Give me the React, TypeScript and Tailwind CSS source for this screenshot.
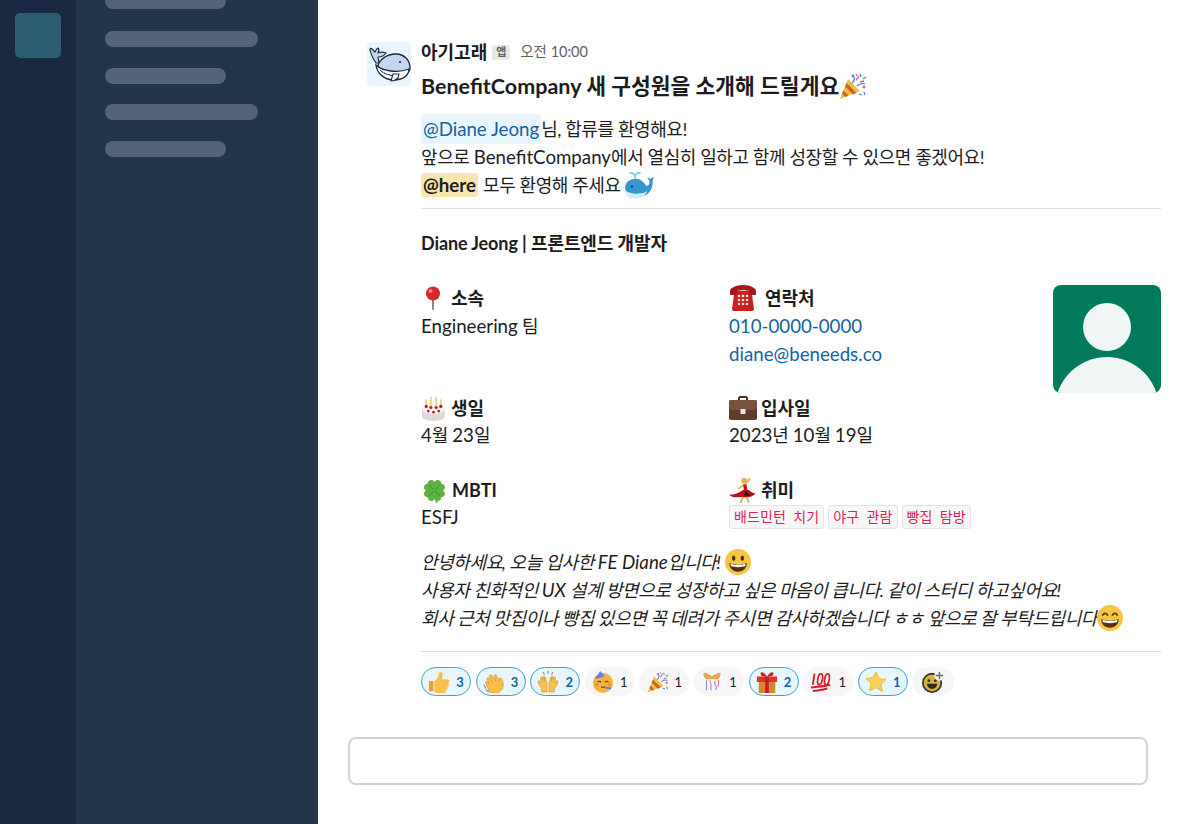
import type { ReactNode } from 'react';

const FONT = "font-['Lato','Noto_Sans_CJK_KR',sans-serif]";

type IconProps = { className?: string };

const Whale = ({ className }: IconProps) => (
  <svg viewBox="0 0 44 44" className={className}>
    <path d="M9 21C7 18 4 13 3 8c0-2 1-2 2-1l3 3c1-2 2-4 3-4 1 1 1 3 0 5 2-1 5-1 8 0-2 3-5 4-8 4 0 2 1 4 1 6z" fill="#c4d6f2" stroke="#1d2b3a" strokeWidth="1.200" strokeLinejoin="round" />
    <path d="M11 25c0-7 9-13 18-13 8 0 14 6 14 14 0 2-1 3-1 3-9 3-21 2-31-4z" fill="#c4d6f2" stroke="#1d2b3a" strokeWidth="1.300" />
    <path d="M9 23c5 5 20 9 33 4 0 7-7 11-15 11-9 0-17-6-18-15z" fill="#fff" stroke="#1d2b3a" strokeWidth="1.300" />
    <path d="M13 28c4 4 11 6 17 6" stroke="#1d2b3a" strokeWidth="1" fill="none" />
    <path d="M26 32l-2 7c2 0 5-1 7-3l1-4z" fill="#fff" stroke="#1d2b3a" strokeWidth="1.100" strokeLinejoin="round" />
    <circle cx="33" cy="20" r="1.100" fill="#1d2b3a" />
  </svg>
);

const Popper = ({ className }: IconProps) => (
  <svg viewBox="0 0 28 28" className={className}>
    <path d="M1 27l8-20 12 12z" fill="#f3bd3e" />
    <path d="M4.500 18.500l5 5-3 1.500-3.500-3.500zM7.500 11l10 10-3.500 1.500-8-8z" fill="#c8652a" />
    <circle cx="14" cy="4" r="1.400" fill="#4a8be0" />
    <circle cx="25" cy="15" r="1.400" fill="#e85a8a" />
    <path d="M13 11c2-2 3-4 2-6M18 14c2-2 5-3 8-2M21 2l1 3M24 7l3-2M20 22l3 1M25 20l1 3" stroke="#4a8be0" strokeWidth="1.300" fill="none" />
    <path d="M17 8l3-4M21 10l4-1M17 2l1 2" stroke="#e85a8a" strokeWidth="1.300" />
  </svg>
);

const SpoutWhale = ({ className }: IconProps) => (
  <svg viewBox="0 0 28 28" className={className}>
    <path d="M10 5C9 3 7 2 5 3M10 5c1-2 3-3 5-2M10 5v3" stroke="#7cc6e8" strokeWidth="1.500" fill="none" />
    <path d="M1 16c0-5 5-8 10-8 5 0 7 4 9 6 2 1 3-1 3-4l-2-3 3 1 3-2-1 4c0 8-4 14-12 14-8 1-13-3-13-8z" fill="#3597cf" />
    <path d="M1 18c3 3 9 4 14 3 3 0 5-1 6-2-2 5-6 7-11 7-5 0-9-3-9-8z" fill="#d4edf8" />
    <circle cx="7" cy="15" r="1" fill="#12344d" />
  </svg>
);

const Pin = ({ className }: IconProps) => (
  <svg viewBox="0 0 24 24" className={className}>
    <rect x="11" y="12" width="2" height="12" rx="1" fill="#8c8c8c" />
    <circle cx="12" cy="7.500" r="7" fill="#d9272e" />
    <circle cx="9.500" cy="5" r="2" fill="#f08a8a" />
  </svg>
);

const Phone = ({ className }: IconProps) => (
  <svg viewBox="0 0 28 28" className={className}>
    <path d="M5 11l3-4h12l3 4 2 14c0 1-1 2-2 2H5c-1 0-2-1-2-2z" fill="#c8201f" />
    <path d="M1 7c0-3 6-6 13-6s13 3 13 6v3c0 1-1 1-2 1h-3c-1 0-2 0-2-1V7c-3-1-9-1-12 0v3c0 1-1 1-2 1H3c-1 0-2 0-2-1z" fill="#a91818" />
    <g fill="#f5e6e0">
      <circle cx="10" cy="12" r="1.300" /><circle cx="14" cy="12" r="1.300" /><circle cx="18" cy="12" r="1.300" />
      <circle cx="10" cy="16" r="1.300" /><circle cx="14" cy="16" r="1.300" /><circle cx="18" cy="16" r="1.300" />
      <circle cx="10" cy="20" r="1.300" /><circle cx="14" cy="20" r="1.300" /><circle cx="18" cy="20" r="1.300" />
    </g>
  </svg>
);

const Cake = ({ className }: IconProps) => (
  <svg viewBox="0 0 24 24" className={className}>
    <path d="M1 12v8c0 2 5 4 11 4s11-2 11-4v-8z" fill="#dedad6" />
    <ellipse cx="12" cy="12" rx="11" ry="5.500" fill="#f6f3f0" />
    <path d="M5 3v8M9.500 1v10M14.500 1v10M19 3v8" stroke="#e8d58a" strokeWidth="1.700" />
    <g fill="#a81f3d">
      <circle cx="5" cy="10" r="1.500" /><circle cx="9.500" cy="11" r="1.500" /><circle cx="14.500" cy="11" r="1.500" /><circle cx="19" cy="10" r="1.500" />
      <circle cx="7" cy="14.500" r="1.300" /><circle cx="12" cy="15.500" r="1.300" /><circle cx="17" cy="14.500" r="1.300" />
    </g>
  </svg>
);

const Briefcase = ({ className }: IconProps) => (
  <svg viewBox="0 0 28 24" className={className}>
    <path d="M9 5V2c0-1 1-2 2-2h6c1 0 2 1 2 2v3h-2V2h-6v3z" fill="#4a3226" />
    <rect x="0" y="4" width="28" height="20" rx="2" fill="#5d3e2d" />
    <rect x="0" y="4" width="28" height="10" rx="2" fill="#7a533c" />
    <rect x="11.500" y="13" width="5" height="5" fill="#e9e6e0" />
  </svg>
);

const Clover = ({ className }: IconProps) => (
  <svg viewBox="0 0 24 24" className={className}>
    <path d="M12 12l2 11" stroke="#5fa53a" strokeWidth="1.500" />
    <g fill="#5cb340">
      <path d="M12 11.500C10 10 6 10 6 6c0-3 4-5 6-1.500C14 1 18 3 18 6c0 4-4 4-6 5.500z" />
      <path d="M12 12.500C10 14 6 14 6 18c0 3 4 5 6 1.500 2 3.500 6 1.500 6-1.500 0-4-4-4-6-5.500z" />
      <path d="M11.500 12C10 10 10 6 6 6c-3 0-5 4-1.500 6C1 14 3 18 6 18c4 0 4-4 5.500-6z" />
      <path d="M12.500 12C14 10 14 6 18 6c3 0 5 4 1.500 6 3.500 2 1.500 6-1.500 6-4 0-4-4-5.500-6z" />
    </g>
    <path d="M12 12L7 7M12 12l5-5M12 12l-5 5M12 12l5 5" stroke="#3f8f2c" strokeWidth=".8" />
  </svg>
);

const Dancer = ({ className }: IconProps) => (
  <svg viewBox="0 0 24 24" className={className}>
    <circle cx="13" cy="4" r="2.500" fill="#e8b34c" />
    <path d="M12 7l3 0 1 6-3 1z" fill="#c4152a" />
    <path d="M14 7l4-5M12 8l-4 3" stroke="#e8b34c" strokeWidth="1.500" />
    <path d="M12 12l5 0c2 2 4 3 6 3-3 3-8 4-12 3-4 0-8 1-11-2 4 0 8-1 12-4z" fill="#b3121f" />
    <path d="M12 18l-2 5M15 18l2 5" stroke="#e0a94a" strokeWidth="1.400" />
    <path d="M14 13l5 4-6 0z" fill="#3a0d10" />
  </svg>
);

const Smile = ({ className, beam }: IconProps & { beam?: boolean }) => (
  <svg viewBox="0 0 24 24" className={className}>
    <circle cx="12" cy="12" r="12" fill="#f6c544" />
    {beam ? (
      <path d="M5 10c1-3 4-3 5 0M14 10c1-3 4-3 5 0" stroke="#5a3a12" strokeWidth="1.500" fill="none" />
    ) : (
      <g fill="#4a2f10"><ellipse cx="8" cy="8.500" rx="1.500" ry="2.500" /><ellipse cx="16" cy="8.500" rx="1.500" ry="2.500" /></g>
    )}
    <path d="M4 13c5 2 11 2 16 0 0 5-3 8-8 8s-8-3-8-8z" fill="#5a2f12" />
    <path d="M5 13.500c4 1.500 10 1.500 14 0l-.5 2.500c-4 1-9 1-13 0z" fill="#fff" />
  </svg>
);

const Thumb = ({ className }: IconProps) => (
  <svg viewBox="0 0 24 24" className={className}>
    <path d="M1 11h5v11H1z" fill="#e89f2c" />
    <path d="M7 11c3-2 5-5 5-9 0-2 4-2 4 2 0 2-1 4-1 5h6c3 0 3 4 1 4 2 1 1 4-1 4 1 2 0 4-2 4 1 1 0 3-2 3H11c-2 0-3-1-4-1z" fill="#f6c04a" />
  </svg>
);

const Clap = ({ className }: IconProps) => (
  <svg viewBox="0 0 24 24" className={className}>
    <path d="M7 21c-3-3-4-7-4-9l1-1 3 3-3-6 2-1 4 5-3-7 2-1 5 7-2-6 2-1 4 7 0-3 2 0 2 5c1 5-2 9-6 11-4 1-7 0-11-3z" fill="#f6c04a" stroke="#d98f25" strokeWidth=".7" strokeLinejoin="round" />
    <path d="M1 15l2 4M3 20l3 3" stroke="#8896a8" strokeWidth="1.300" />
  </svg>
);

const Hands = ({ className }: IconProps) => (
  <svg viewBox="0 0 24 24" className={className}>
    <g fill="#f6c04a" stroke="#d98f25" strokeWidth=".6" strokeLinejoin="round">
      <path d="M5 23v-4l-3-4-1-4 1.500-.5L4 13V7h1.500l.5 3V6h2v5V7h1.500l.500 4c1 0 1 2 1 3v9z" />
      <path d="M19 23v-4l3-4 1-4-1.500-.5L20 13V7h-1.500l-.5 3V6h-2v5V7h-1.500l-.5 4c-1 0-1 2-1 3v9z" />
    </g>
    <path d="M7 1l1 3M12 0v3M17 1l-1 3" stroke="#6e6e6e" strokeWidth="1" />
  </svg>
);

const PartyFace = ({ className }: IconProps) => (
  <svg viewBox="0 0 24 24" className={className}>
    <circle cx="12" cy="13" r="11" fill="#f5b53c" />
    <path d="M3 9L9 0l5 6z" fill="#6c7fd8" />
    <path d="M6 12c1-1 3-1 4 0M14 12c1-1 3-1 4 0M10 17c1 1 3 1 4 0" stroke="#5a3a12" strokeWidth="1.300" fill="none" />
    <circle cx="5" cy="15" r="2" fill="#ee8a5e" />
    <circle cx="19" cy="15" r="2" fill="#ee8a5e" />
    <path d="M14 18l7 1" stroke="#6c7fd8" strokeWidth="2" />
  </svg>
);

const Confetti = ({ className }: IconProps) => (
  <svg viewBox="0 0 24 24" className={className}>
    <path d="M3 2c3 0 7 2 9 4 2-2 6-4 9-4 1 3-1 6-3 7H6C4 8 2 5 3 2z" fill="#e9a850" />
    <g stroke="#6d84de" strokeWidth="1.100" fill="none"><path d="M6 10c1 2-1 4 0 6s-1 3 0 5" /><path d="M15 11c1 2-1 3 1 5s0 3 0 5" /></g>
    <g stroke="#e86a8e" strokeWidth="1.100" fill="none"><path d="M10 10c-1 3 2 4 1 6s0 3 0 5" /><path d="M19 10c1 3-1 4 0 7" /></g>
  </svg>
);

const Gift = ({ className }: IconProps) => (
  <svg viewBox="0 0 24 24" className={className}>
    <rect x="3" y="10" width="18" height="14" fill="#d48a2c" />
    <rect x="1" y="6" width="22" height="6" fill="#d9352b" />
    <rect x="10" y="6" width="4" height="18" fill="#c4211d" />
    <path d="M12 6C9 1 5 0 5 3s4 3 7 3zM12 6c3-5 7-6 7-3s-4 3-7 3z" fill="#c4211d" />
  </svg>
);

const Hundred = ({ className }: IconProps) => (
  <svg viewBox="0 0 24 24" className={className}>
    <g stroke="#d6212b" fill="none" strokeWidth="2">
      <path d="M5 3L3 15" />
      <ellipse cx="11" cy="9" rx="2.500" ry="6" transform="rotate(10 11 9)" />
      <ellipse cx="18.500" cy="9" rx="2.500" ry="6" transform="rotate(10 18.500 9)" />
      <path d="M1 18c7-1 14-1 21-3M3 22c6-1 11-1 16-3" />
    </g>
  </svg>
);

const Star = ({ className }: IconProps) => (
  <svg viewBox="0 0 24 24" className={className}>
    <path d="M12 1l3.400 7.200 7.600 1-5.500 5.400 1.400 7.900L12 18l-6.900 3.500 1.400-7.900L1 8.200l7.600-1z" fill="#f8d05c" stroke="#eeb93a" strokeWidth="1" strokeLinejoin="round" />
  </svg>
);

const AddReaction = ({ className }: IconProps) => (
  <svg viewBox="0 0 24 24" className={className}>
    <circle cx="11" cy="13" r="10" fill="#d9b23c" stroke="#3a3a36" strokeWidth="2" />
    <circle cx="7.500" cy="10.500" r="1.500" fill="#2d2d2a" />
    <circle cx="14.500" cy="10.500" r="1.500" fill="#2d2d2a" />
    <path d="M5.500 14h11c0 3.500-2.500 5.500-5.500 5.500s-5.500-2-5.500-5.500z" fill="#2d2d2a" />
    <circle cx="19" cy="5" r="5.500" fill="#f5f5f5" />
    <path d="M19 1v8M15 5h8" stroke="#6d6d6d" strokeWidth="1.600" />
  </svg>
);

// latin runs sit a little larger than the hangul around them
const Lat = ({ children }: { children: ReactNode }) => (
  <span className="text-[18.7px] tracking-normal">{children}</span>
);

const Field = ({ icon, label, children }: { icon: ReactNode; label: string; children: ReactNode }) => (
  <div>
    <div className="flex h-7 items-center font-bold tracking-normal">
      {icon}
      {label}
    </div>
    {children}
  </div>
);

const Reaction = ({ icon, count, active }: { icon: ReactNode; count: number; active?: boolean }) => (
  <div
    className={
      active
        ? 'flex h-[29px] w-[50px] items-center justify-center gap-[6px] rounded-full border-[1.5px] border-[#3f9fd0] bg-[#e8f5fa] text-[13px] font-bold tracking-normal text-[#1264a3]'
        : 'flex h-[29px] w-[50px] items-center justify-center gap-[6px] rounded-full bg-[#f6f6f6] text-[13px] tracking-normal text-[#1d1c1d]'
    }
  >
    {icon}
    {count}
  </div>
);

const Tag = ({ children }: { children: string }) => (
  <span className="rounded-[3px] border border-[#e3e3e3] bg-[#f7f7f7] px-1 py-[2px] text-[14px] leading-[18px] tracking-[0.1px] whitespace-pre text-[#e01e5a]">
    {children}
  </span>
);

const reactions = [
  { icon: <Thumb className="h-[22px] w-[22px]" />, count: 3, active: true },
  { icon: <Clap className="h-[22px] w-[22px]" />, count: 3, active: true },
  { icon: <Hands className="h-[22px] w-[22px]" />, count: 2, active: true },
  { icon: <PartyFace className="h-[22px] w-[22px]" />, count: 1 },
  { icon: <Popper className="h-[22px] w-[22px]" />, count: 1 },
  { icon: <Confetti className="h-[22px] w-[22px]" />, count: 1 },
  { icon: <Gift className="h-[22px] w-[22px]" />, count: 2, active: true },
  { icon: <Hundred className="h-[22px] w-[22px]" />, count: 1 },
  { icon: <Star className="h-[22px] w-[22px]" />, count: 1, active: true },
];

export default function App() {
  return (
    <div className={`${FONT} flex h-[824px] w-[1200px] overflow-hidden bg-white text-[#1d1c1d]`}>
      <div className="w-[76px] shrink-0 bg-[#1a2942] pt-[13px] pl-[15px]">
        <div className="h-[45px] w-[46px] rounded-[5px] bg-[#2b5d73]" />
      </div>
      <div className="-mt-[36px] flex h-[860px] w-[242px] shrink-0 flex-col gap-[20.4px] bg-[#22354b] pt-[29px] pl-[29px]">
        <div className="mb-[2px] h-4 w-[121px] rounded-full bg-[#52637a]" />
        <div className="h-4 w-[153px] rounded-full bg-[#52637a]" />
        <div className="h-4 w-[121px] rounded-full bg-[#52637a]" />
        <div className="h-4 w-[153px] rounded-full bg-[#52637a]" />
        <div className="h-4 w-[121px] rounded-full bg-[#52637a]" />
      </div>
      <div className="flex min-w-0 flex-1 flex-col pt-[39px] pr-[39px] pl-[49px]">
        <div className="flex gap-[10px]">
          <div className="mt-[3px] h-11 w-11 shrink-0 rounded-[4px] bg-[#e9f5fd]">
            <Whale className="h-11 w-11" />
          </div>
          <div className="min-w-0 flex-1 text-[18px] leading-7 tracking-[-0.4px]">
            <div className="flex h-[26px] items-center tracking-normal">
              <span className="text-[18px] font-bold">아기고래</span>
              <span className="ml-[5px] flex h-[15px] w-[18px] items-center justify-center rounded-[2px] bg-[#e8e8e8] text-[11px] font-bold text-[#616061]">앱</span>
              <span className="ml-[10px] text-[14.500px] text-[#616061]">오전 10:00</span>
            </div>
            <div className="mt-[7px] flex h-7 items-center text-[21.500px] font-bold tracking-normal">
              BenefitCompany 새 구성원을 소개해 드릴게요
              <Popper className="h-7 w-7" />
            </div>
            <div className="mt-[15px]">
              <span className="rounded-[3px] bg-[#e8f5fa] px-[2px] py-[4px] text-[#1264a3]"><Lat>@Diane Jeong</Lat></span>님, 합류를 환영해요!
            </div>
            <div>앞으로 <Lat>BenefitCompany</Lat>에서 열심히 일하고 함께 성장할 수 있으면 좋겠어요!</div>
            <div className="flex h-7 items-center">
              <span className="rounded-[3px] bg-[#f8e6b0] px-[2px] font-bold leading-[24px]"><Lat>@here</Lat></span>
              <span className="ml-[5px]">모두 환영해 주세요</span>
              <SpoutWhale className="ml-[3px] h-[31px] w-[31px]" />
            </div>
            <div className="mt-[9px] border-t border-[#dddddd] pt-[20px]">
              <div className="text-[18px] font-bold tracking-[-0.1px]">Diane Jeong | 프론트엔드 개발자</div>
              <div className="mt-[28px] flex">
                <div className="-mt-[1px] grid w-[632px] grid-cols-[308px_1fr]">
                  <Field icon={<Pin className="mr-[6px] h-6 w-6" />} label="소속">
                    <div><Lat>Engineering</Lat> 팀</div>
                  </Field>
                  <Field icon={<Phone className="mr-2 h-7 w-7" />} label="연락처">
                    <div className="text-[#1264a3]"><Lat>010-0000-0000</Lat></div>
                    <div className="text-[#1264a3]"><Lat>diane@beneeds.co</Lat></div>
                  </Field>
                  <div className="mt-[26px]">
                    <Field icon={<Cake className="mr-[5px] h-[25px] w-[25px]" />} label="생일">
                      <div className="-mt-[1px]"><Lat>4</Lat>월 <Lat>23</Lat>일</div>
                    </Field>
                  </div>
                  <div className="mt-[26px]">
                    <Field icon={<Briefcase className="mr-[4px] h-6 w-7" />} label="입사일">
                      <div className="-mt-[1px]"><Lat>2023</Lat>년 <Lat>10</Lat>월 <Lat>19</Lat>일</div>
                    </Field>
                  </div>
                  <div className="mt-[27px]">
                    <Field icon={<Clover className="mr-[4px] h-[27px] w-[27px]" />} label="MBTI">
                      <div className="-mt-[1px]"><Lat>ESFJ</Lat></div>
                    </Field>
                  </div>
                  <div className="mt-[27px]">
                    <Field icon={<Dancer className="mr-[4px] h-7 w-7" />} label="취미">
                      <div className="mt-[1px] flex gap-1">
                        <Tag>{'배드민턴  치기'}</Tag>
                        <Tag>{'야구  관람'}</Tag>
                        <Tag>{'빵집  탐방'}</Tag>
                      </div>
                    </Field>
                  </div>
                </div>
                <div className="flex-1" />
                <div className="relative h-[108px] w-[108px] shrink-0 overflow-hidden rounded-[8px] bg-[#007a5a]">
                  <div className="absolute top-[18px] left-[30px] h-[48px] w-[48px] rounded-full bg-[#f0f6f5]" />
                  <div className="absolute top-[72px] left-[2px] h-[104px] w-[104px] rounded-full bg-[#f0f6f5]" />
                </div>
              </div>
              <div className="mt-[17px] italic">
                <div className="flex h-7 items-center whitespace-pre">
                  안녕하세요, 오늘 입사한 <Lat>FE Diane</Lat>입니다!
                  <Smile className="ml-[5px] h-[26px] w-[26px]" />
                </div>
                <div>사용자 친화적인 <Lat>UX</Lat> 설계 방면으로 성장하고 싶은 마음이 큽니다. 같이 스터디 하고싶어요!</div>
                <div className="flex h-7 items-center">
                  회사 근처 맛집이나 빵집 있으면 꼭 데려가 주시면 감사하겠습니다 ㅎㅎ 앞으로 잘 부탁드립니다
                  <Smile beam className="h-[26px] w-[26px]" />
                </div>
              </div>
              <div className="mt-[19px] border-t border-[#dddddd] pt-[15px]">
                <div className="flex gap-[4.600px]">
                  {reactions.map((r, i) => (
                    <Reaction key={i} icon={r.icon} count={r.count} active={r.active} />
                  ))}
                  <div className="flex h-[29px] w-[42px] items-center justify-center rounded-full bg-[#f6f6f6]">
                    <AddReaction className="h-[22px] w-[22px]" />
                  </div>
                </div>
              </div>
            </div>
          </div>
        </div>
        <div className="mt-[41px] -ml-[19px] h-12 w-[800px] rounded-lg border-2 border-[#d2d2d2] bg-white" />
      </div>
    </div>
  );
}
